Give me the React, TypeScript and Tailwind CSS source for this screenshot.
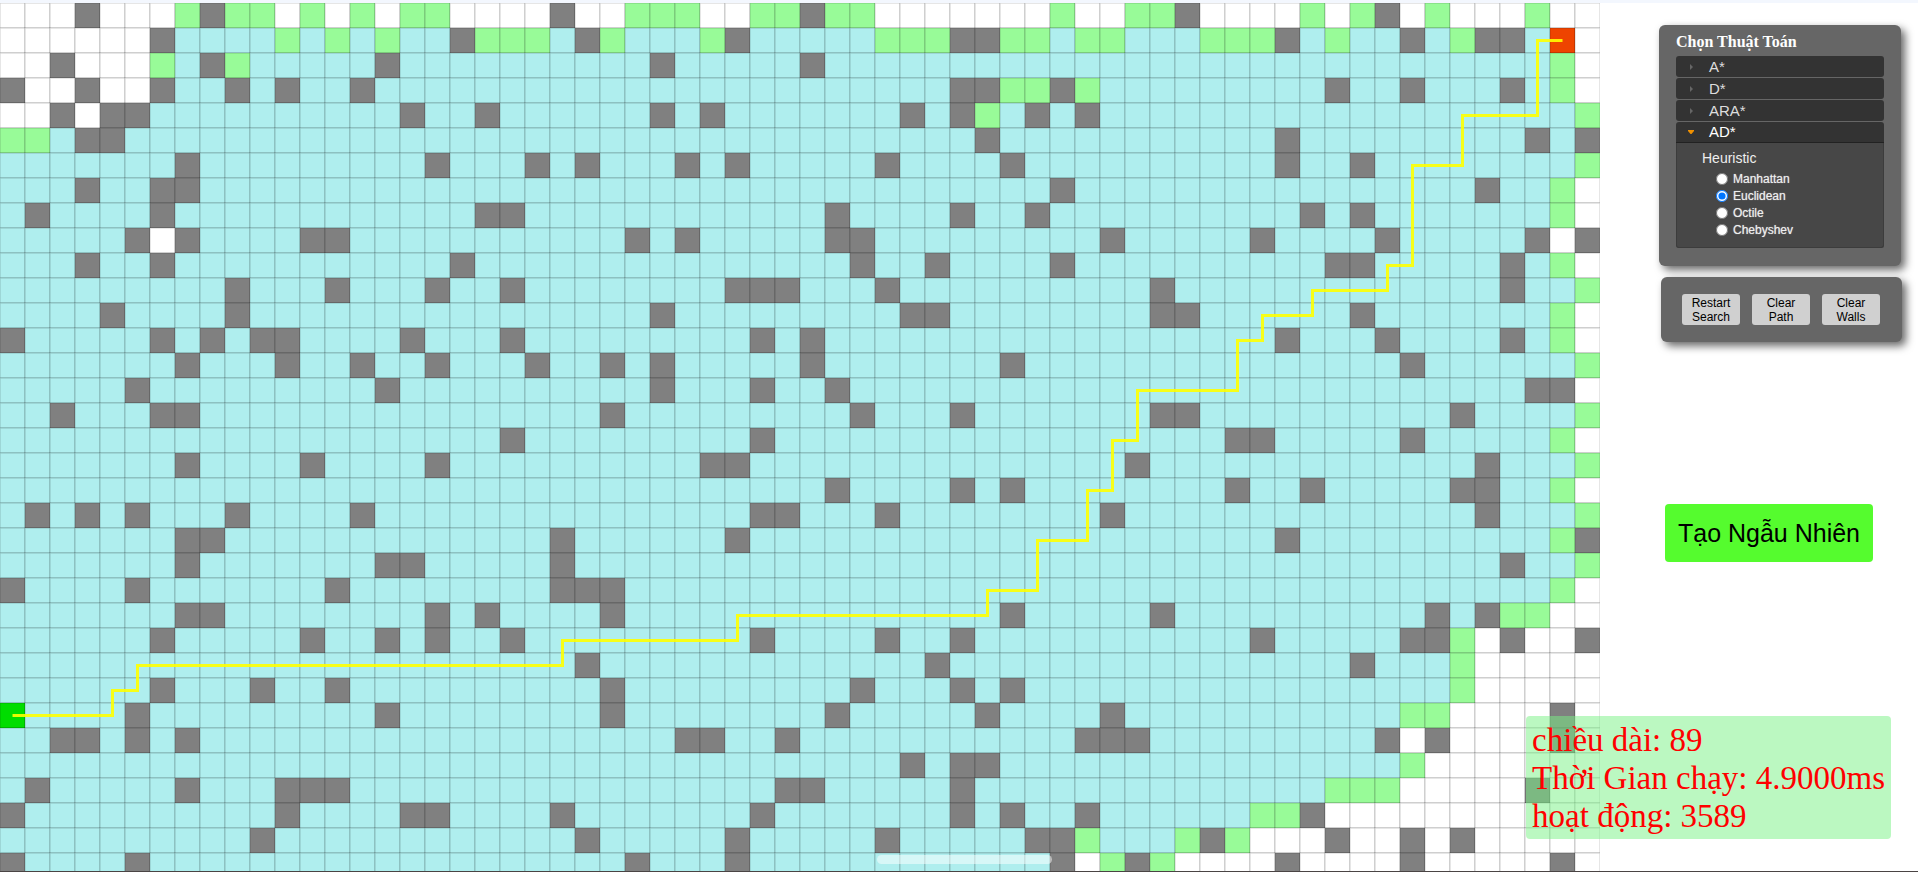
import { useState } from "react";

const CELL = 25;
const COLS = 64;

type RowSpec = { empty?: string; open?: string; wall?: string };

// Every cell is "closed" unless a row lists it as empty, open or wall.
const ROWS: RowSpec[] = [
  { empty: "0-63", open: "7 9 10 12 14 16 17 25-27 30 31 33 34 42 45 46 52 54 57 61", wall: "3 8 22 32 47 55" },
  { empty: "0-5 63", open: "11 13 15 19-21 24 28 35-37 40 41 43 44 48-50 53 58", wall: "6 18 23 29 38 39 51 56 59 60" },
  { empty: "0-5 63", open: "6 9 62", wall: "2 8 15 26 32" },
  { empty: "0-5 63", open: "40 41 43 62", wall: "0 3 6 9 11 14 38 39 42 53 56 60" },
  { empty: "0-3", open: "39 63", wall: "2 4 5 16 19 26 28 36 38 41 43" },
  { open: "0 1", wall: "3 4 39 51 61 63" },
  { open: "63", wall: "7 17 21 23 27 29 35 40 51 54" },
  { empty: "63", open: "62", wall: "3 6 7 42 59" },
  { empty: "63", open: "62", wall: "1 6 19 20 33 38 41 52 54" },
  { empty: "6 62", wall: "5 7 12 13 25 27 33 34 44 50 55 61 63" },
  { empty: "63", open: "62", wall: "3 6 18 34 37 42 53 54 60" },
  { open: "63", wall: "9 13 17 20 29-31 35 46 60" },
  { empty: "63", open: "62", wall: "4 9 26 36 37 46 47 54" },
  { empty: "63", open: "62", wall: "0 6 8 10 11 16 20 30 32 51 55 60" },
  { open: "63", wall: "7 11 14 17 21 24 26 32 40 56" },
  { empty: "63", wall: "5 15 26 30 33 61 62" },
  { open: "63", wall: "2 6 7 24 34 38 46 47 58" },
  { empty: "63", open: "62", wall: "20 30 49 50 56" },
  { open: "63", wall: "7 12 17 28 29 45 59" },
  { empty: "63", open: "62", wall: "33 38 40 49 52 58 59" },
  { open: "63", wall: "1 3 5 9 14 30 31 35 44 59" },
  { open: "62", wall: "7 8 22 29 51 63" },
  { open: "63", wall: "7 15 16 22 60" },
  { empty: "63", open: "62", wall: "0 5 13 22-24" },
  { empty: "62 63", open: "60 61", wall: "7 8 17 19 24 40 46 57 59" },
  { empty: "59-63", open: "58", wall: "6 12 15 17 20 30 35 38 50 56 57 60 63" },
  { empty: "59-63", open: "58", wall: "23 37 54" },
  { empty: "59-63", open: "58", wall: "6 10 13 24 34 38 40" },
  { empty: "58-63", open: "56 57", wall: "5 15 24 33 39 44 62" },
  { empty: "56-63", wall: "2 3 5 7 27 28 31 43-45 55 57 62" },
  { empty: "57-63", open: "56", wall: "36 38 39" },
  { empty: "56-63", open: "53-55", wall: "1 7 11-13 31 32 38 61" },
  { empty: "53-63", open: "50 51", wall: "0 11 16 17 22 30 38 40 43 52" },
  { empty: "50-63", open: "43 47 49", wall: "10 23 29 35 41 42 48 53 56 58" },
  { empty: "43 47-63", open: "44 46", wall: "0 5 25 29 42 45 51 56 62" },
];

const START: [number, number] = [0, 28];
const GOAL: [number, number] = [62, 1];

const PATH: [number, number][] = [
  START, [4, 28], [4, 27], [5, 27], [5, 26], [22, 26], [22, 25], [29, 25], [29, 24], [39, 24],
  [39, 23], [41, 23], [41, 21], [43, 21], [43, 19], [44, 19], [44, 17], [45, 17], [45, 15],
  [49, 15], [49, 13], [50, 13], [50, 12], [52, 12], [52, 11], [55, 11], [55, 10], [56, 10],
  [56, 6], [58, 6], [58, 4], [61, 4], [61, 1], GOAL,
];

function columns(list = ""): number[] {
  return list
    .split(" ")
    .filter(Boolean)
    .flatMap((token) => {
      const [from, to = from] = token.split("-").map(Number);
      return Array.from({ length: to - from + 1 }, (_, i) => from + i);
    });
}

function rowColors(spec: RowSpec, row: number): string[] {
  const colors = new Array<string>(COLS).fill("#afeeee");
  columns(spec.empty).forEach((c) => (colors[c] = "#ffffff"));
  columns(spec.open).forEach((c) => (colors[c] = "#98fb98"));
  columns(spec.wall).forEach((c) => (colors[c] = "#808080"));
  if (row === START[1]) colors[START[0]] = "#00dd00";
  if (row === GOAL[1]) colors[GOAL[0]] = "#ee4400";
  return colors;
}

function Board() {
  const points = PATH.map(([c, r]) => `${c * CELL + CELL / 2},${r * CELL + CELL / 2}`).join(" ");
  return (
    <svg width={COLS * CELL} height={ROWS.length * CELL} className="block" aria-label="Grid">
      <g stroke="#000" strokeOpacity={0.2}>
        {ROWS.map((spec, r) =>
          rowColors(spec, r).map((fill, c) => (
            <rect key={`${r}-${c}`} x={c * CELL} y={r * CELL} width={CELL} height={CELL} fill={fill} />
          )),
        )}
      </g>
      <polyline points={points} fill="none" stroke="#ffff00" strokeWidth={3} strokeOpacity={0.9} />
    </svg>
  );
}

const ALGORITHMS = ["A*", "D*", "ARA*", "AD*"];
const HEURISTICS = ["Manhattan", "Euclidean", "Octile", "Chebyshev"];
const ACTIONS = ["Restart Search", "Clear Path", "Clear Walls"];

function AlgorithmPanel() {
  const [active, setActive] = useState("AD*");
  const [heuristic, setHeuristic] = useState("Euclidean");
  return (
    <section className="w-[242px] rounded-md bg-[#666] px-[17px] pt-[7px] pb-[18px] shadow-[4px_4px_8px_rgba(0,0,0,0.6)]">
      <h2 className="font-['Liberation_Serif',serif] text-base leading-5 font-bold text-white">Chọn Thuật Toán</h2>
      <div className="mt-1 flex flex-col gap-px">
        {ALGORITHMS.map((name) => {
          const open = name === active;
          return (
            <div key={name}>
              <button
                type="button"
                aria-expanded={open}
                onClick={() => setActive(name)}
                className={
                  open
                    ? "flex h-[21px] w-full items-center rounded-t-[3px] border-b border-[#222] bg-[#333] pl-3 text-[15px] leading-5 text-white"
                    : "flex h-[21px] w-full items-center rounded-[3px] bg-[#333] pl-3 text-[15px] leading-5 text-[#ddd]"
                }
              >
                <svg width="6" height="6" viewBox="0 0 6 6" className="mr-[15px]" aria-hidden="true">
                  {open ? <path d="M0 1h6v1L3.500 5h-1L0 2z" fill="#f09000" /> : <path d="M2 0l3 3-3 3z" fill="#666" />}
                </svg>
                {name}
              </button>
              {open && (
                <fieldset className="h-[105px] rounded-b-[3px] border border-t-0 border-[#3c3c3c] bg-[#474747] pt-[6px] pl-[25px] text-[#eee]">
                  <legend className="float-left w-full text-sm leading-[18px]">Heuristic</legend>
                  <div className="clear-both flex flex-col pt-[3px] pl-[14px]">
                    {HEURISTICS.map((h) => (
                      <label
                        key={h}
                        className="flex h-[17px] items-center gap-[5px] text-xs leading-4 text-[#eee] [text-shadow:0_0_1px_#bbb]"
                      >
                        <input
                          type="radio"
                          name="heuristic"
                          checked={h === heuristic}
                          onChange={() => setHeuristic(h)}
                          className="m-0 size-3"
                        />
                        {h}
                      </label>
                    ))}
                  </div>
                </fieldset>
              )}
            </div>
          );
        })}
      </div>
    </section>
  );
}

export default function App() {
  return (
    <div className="relative h-screen overflow-hidden border-t-[3px] border-b border-t-[#f3f7fe] border-b-[#4a4444] bg-white font-['Liberation_Sans',Arial,sans-serif]">
      <main className="flex">
        <div className="min-w-0 flex-1 overflow-hidden">
          <Board />
        </div>
        <aside className="flex w-[318px] shrink-0 flex-col items-end pt-[22px] pr-4">
          <div className="pr-px">
            <AlgorithmPanel />
          </div>
          <section className="mt-[11px] flex w-[241px] justify-between rounded-md bg-[#666] pt-[17px] pr-[22px] pb-[17px] pl-[21px] shadow-[4px_4px_8px_rgba(0,0,0,0.6)]">
            {ACTIONS.map((label) => (
              <button
                key={label}
                type="button"
                className="h-[31px] w-[58px] rounded-[3px] bg-[#d0d0d0] px-2 text-xs leading-[14px] text-black"
              >
                {label}
              </button>
            ))}
          </section>
          <button
            type="button"
            className="mt-[162px] mr-[29px] h-[58px] w-[208px] rounded bg-[#55fc2e] text-[25px] leading-8 whitespace-nowrap text-black"
          >
            Tạo Ngẫu Nhiên
          </button>
        </aside>
      </main>

      <div className="absolute right-[27px] bottom-[32px] rounded bg-[rgba(119,241,131,0.5)] px-[6px] pt-[5px] pb-1 font-['Liberation_Serif',serif] text-[33px] leading-[38px] whitespace-nowrap text-[#ff0000]">
        <p>chiều dài: 89</p>
        <p>Thời Gian chạy: 4.9000ms</p>
        <p>hoạt động: 3589</p>
      </div>

      <div className="absolute bottom-[7px] left-[877px] h-[9px] w-[175px] rounded-full bg-white/50" />
    </div>
  );
}
